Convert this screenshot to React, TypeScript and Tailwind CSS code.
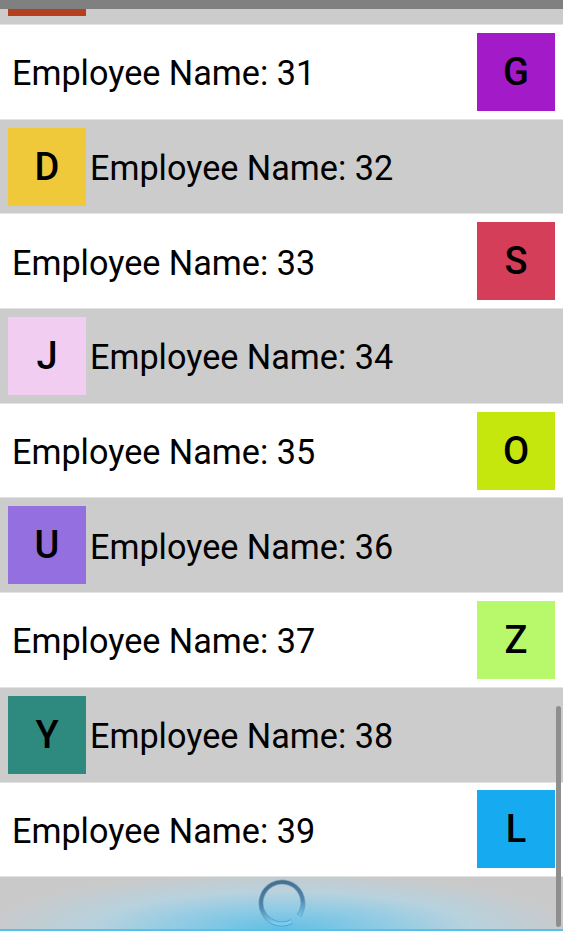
import clsx from "clsx";

type Employee = { n: number; letter: string; color: string };

const employees: Employee[] = [
  { n: 31, letter: "G", color: "#a31ac9" },
  { n: 32, letter: "D", color: "#efc93a" },
  { n: 33, letter: "S", color: "#d53e59" },
  { n: 34, letter: "J", color: "#f0cdf1" },
  { n: 35, letter: "O", color: "#c5e70e" },
  { n: 36, letter: "U", color: "#936fe0" },
  { n: 37, letter: "Z", color: "#b8f86b" },
  { n: 38, letter: "Y", color: "#2e8a7e" },
  { n: 39, letter: "L", color: "#16abf0" },
];

function Avatar({ letter, color }: { letter: string; color: string }) {
  return (
    <div
      className="flex h-[78px] w-[78px] shrink-0 items-center justify-center text-[38px] font-medium leading-none text-black"
      style={{ backgroundColor: color }}
    >
      {letter}
    </div>
  );
}

function Row({ n, letter, color }: Employee) {
  const odd = n % 2 === 1;
  return (
    <div
      className={clsx(
        "flex h-[94.7px] shrink-0 items-center border-b border-[#e3e3e3]",
        odd ? "bg-white pl-3 pr-2" : "bg-[#cccccc] px-2"
      )}
    >
      {!odd && <Avatar letter={letter} color={color} />}
      <span className={clsx("flex-1 pt-[4px] text-[34.2px] text-black", !odd && "pl-1")}>Employee Name: {n}</span>
      {odd && <Avatar letter={letter} color={color} />}
    </div>
  );
}

function Spinner() {
  return (
    <svg width="48" height="48" viewBox="0 0 48 48">
      <defs>
        <linearGradient id="ring" x1="0" y1="0" x2="1" y2="0.3">
          <stop offset="0%" stopColor="#3d6b8c" />
          <stop offset="60%" stopColor="#4f86ad" />
          <stop offset="100%" stopColor="#74cdf2" />
        </linearGradient>
      </defs>
      <circle cx="24" cy="24" r="21" fill="none" stroke="#2f5570" strokeWidth="5" strokeOpacity="0.35" strokeDasharray="122 10" transform="rotate(62 24 24)" />
      <circle cx="24" cy="24" r="21" fill="none" stroke="url(#ring)" strokeWidth="3.5" strokeDasharray="122 10" transform="rotate(62 24 24)" />
    </svg>
  );
}

export default function App() {
  return (
    <div className="relative flex h-[931px] w-[563px] flex-col overflow-hidden bg-white font-['Roboto',sans-serif]">
      {/* title bar, mostly scrolled away */}
      <div className="h-[9px] shrink-0 bg-[#808080]" />
      {/* bottom of row 30 */}
      <div className="h-[16px] shrink-0 border-b border-[#e3e3e3] bg-[#cccccc] px-2">
        <div className="h-[7px] w-[78px] bg-[#b5401f]" />
      </div>
      <div className="flex flex-col">
        {employees.map((e) => (
          <Row key={e.n} {...e} />
        ))}
      </div>
      <div className="flex h-[53.7px] shrink-0 items-center justify-center border-b-2 border-[#55c2ec] bg-[#c9c9c9] bg-[radial-gradient(ellipse_52%_110%_at_50%_100%,#62bfe6_0%,#8fcbe4_35%,#b8d2de_65%,rgba(201,201,201,0)_100%)]">
        <Spinner />
      </div>
      <div className="absolute right-[2px] top-[706px] h-[221px] w-[5px] rounded-full bg-[#8e8e8e]" />
    </div>
  );
}
